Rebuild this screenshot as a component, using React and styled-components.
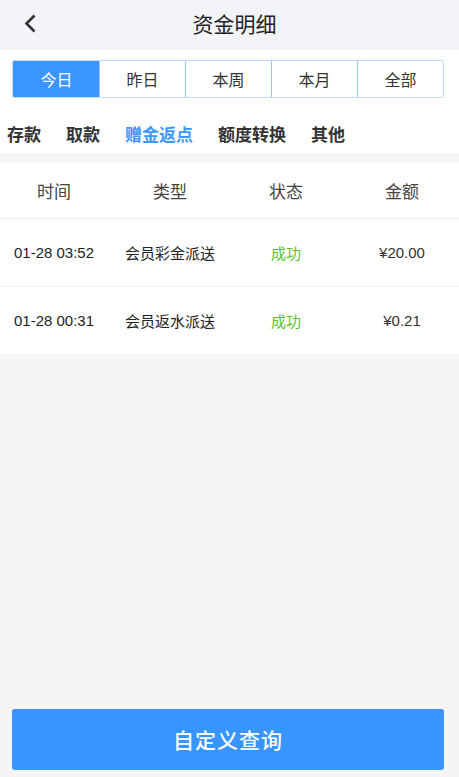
import React, { useState } from 'react'
import styled, { createGlobalStyle } from 'styled-components'

const GlobalStyle = createGlobalStyle`
  html, body {
    margin: 0;
    padding: 0;
    background: #f5f5f5;
    font-family: "Noto Sans CJK SC", "Liberation Sans", sans-serif;
  }
  * {
    box-sizing: border-box;
  }
`

const Page = styled.div`
  width: 459px;
  height: 777px;
  display: flex;
  flex-direction: column;
  background: #f5f5f5;
`

const Header = styled.div`
  height: 50px;
  padding: 0 0 4px 10px;
  display: flex;
  align-items: center;
  justify-content: center;
  position: relative;
  background: #f3f4f8;
`

const Title = styled.h1`
  margin: 0;
  font-size: 21px;
  font-weight: 400;
  color: #222;
`

const BackButton = styled.button`
  position: absolute;
  left: 20px;
  top: 12px;
  width: 24px;
  height: 24px;
  padding: 0;
  border: none;
  background: none;
  cursor: pointer;
`

const FilterPanel = styled.div`
  background: #fff;
  padding: 10px 0 0;
`

const Segments = styled.div`
  display: flex;
  margin: 0 15px 0 12px;
  height: 38px;
  border: 1px solid #c4dcfb;
  border-radius: 2px;
  overflow: hidden;
`

const Segment = styled.button`
  flex: 1;
  border: none;
  border-left: 1px solid ${(p) => (p.$first ? 'transparent' : '#9cc6f7')};
  background: ${(p) => (p.$active ? '#3a95ff' : '#fff')};
  color: ${(p) => (p.$active ? '#fff' : '#333')};
  font-family: inherit;
  font-size: 16px;
  padding: 0;
  cursor: pointer;
`

const Tabs = styled.div`
  display: flex;
  gap: 25px;
  padding: 25px 7px 8px;
  line-height: 22px;
`

const Tab = styled.span`
  font-size: 17px;
  font-weight: 700;
  color: ${(p) => (p.$active ? '#3d98ff' : '#333')};
  cursor: pointer;
`

const Table = styled.div`
  margin-top: 10px;
  background: #fff;
  overflow: hidden;
`

const Row = styled.div`
  display: grid;
  grid-template-columns: repeat(4, 116px);
  justify-content: center;
  align-items: center;
  height: ${(p) => (p.$head ? '55px' : '68px')};
  border-top: ${(p) => (p.$head ? 'none' : '1px solid #f0f0f0')};
`

const Cell = styled.div`
  text-align: center;
  padding-right: 3px;
  font-size: ${(p) => (p.$head ? '17px' : '15px')};
  color: ${(p) => p.$color || (p.$head ? '#444' : '#222')};
  font-family: ${(p) => (p.$num ? '"Liberation Sans", "Noto Sans CJK SC", sans-serif' : 'inherit')};
`

const Spacer = styled.div`
  flex: 1;
`

const QueryButton = styled.button`
  margin: 0 15px 7px 12px;
  height: 61px;
  padding-bottom: 2px;
  border: none;
  border-radius: 3px;
  background: #3895ff;
  color: #fff;
  font-family: inherit;
  font-size: 21px;
  font-weight: 500;
  letter-spacing: 1px;
  cursor: pointer;
`

const periods = ['今日', '昨日', '本周', '本月', '全部']
const kinds = ['存款', '取款', '赠金返点', '额度转换', '其他']
const records = [
  { time: '01-28 03:52', type: '会员彩金派送', status: '成功', amount: '¥20.00' },
  { time: '01-28 00:31', type: '会员返水派送', status: '成功', amount: '¥0.21' },
]

export default function App() {
  const [period, setPeriod] = useState(0)
  const [kind, setKind] = useState(2)

  return (
    <Page>
      <GlobalStyle />
      <Header>
        <BackButton aria-label="back">
          <svg width="24" height="24" viewBox="0 0 24 24">
            <path d="M14.5 3.5 L6.5 11.5 L14.5 19.5" fill="none" stroke="#333" strokeWidth="2.6" />
          </svg>
        </BackButton>
        <Title>资金明细</Title>
      </Header>
      <FilterPanel>
        <Segments>
          {periods.map((p, i) => (
            <Segment key={p} $first={i === 0} $active={i === period} onClick={() => setPeriod(i)}>
              {p}
            </Segment>
          ))}
        </Segments>
        <Tabs>
          {kinds.map((k, i) => (
            <Tab key={k} $active={i === kind} onClick={() => setKind(i)}>
              {k}
            </Tab>
          ))}
        </Tabs>
      </FilterPanel>
      <Table>
        <Row $head>
          <Cell $head>时间</Cell>
          <Cell $head>类型</Cell>
          <Cell $head>状态</Cell>
          <Cell $head>金额</Cell>
        </Row>
        {records.map((r) => (
          <Row key={r.time}>
            <Cell $num>{r.time}</Cell>
            <Cell>{r.type}</Cell>
            <Cell $color="#5bc22a">{r.status}</Cell>
            <Cell $num $color="#333">{r.amount}</Cell>
          </Row>
        ))}
      </Table>
      <Spacer />
      <QueryButton>自定义查询</QueryButton>
    </Page>
  )
}
